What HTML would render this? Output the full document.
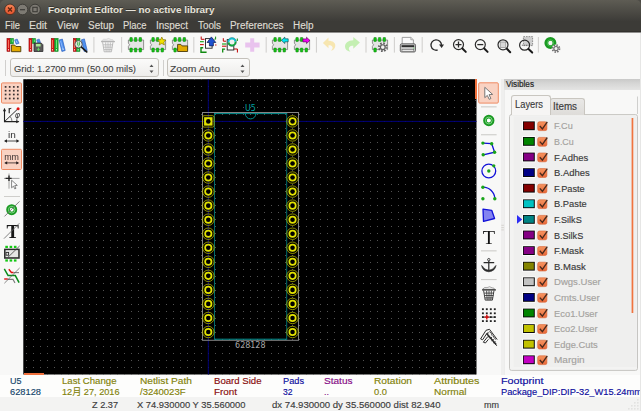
<!DOCTYPE html><html><head><meta charset="utf-8"><title>Footprint Editor</title><style>
html,body{margin:0;padding:0;}
body{width:641px;height:411px;overflow:hidden;background:#f8f8f7;font-family:"Liberation Sans","Noto Sans CJK SC",sans-serif;position:relative;}
.a{position:absolute;}
.t{position:absolute;white-space:nowrap;line-height:1;transform-origin:0 0;-webkit-text-stroke:0.15px currentColor;}
#title{left:0;top:0;width:641px;height:21px;background:linear-gradient(#5e5c54,#3d3c38);border-radius:5px 5px 0 0;}
#menu{left:0;top:21px;width:641px;height:12px;background:linear-gradient(#3c3b37,#3c3b37 10px,#32312e 10px,#32312e 11px,#908f8d 11px);}
#canvas{left:24px;top:79px;width:453px;height:296px;background:#000;overflow:hidden;}
.sep{position:absolute;width:1px;background:#d0cfcd;}
.hsep{position:absolute;height:1px;background:#cfcecb;}
.combo{position:absolute;height:19px;border:1px solid #c4c1bb;border-radius:3px;background:linear-gradient(#fbfbfa,#eeedeb);box-sizing:border-box;}
.pressed{position:absolute;background:#f9d8ca;border:1px solid #f0a689;border-radius:2px;box-sizing:border-box;}
</style></head><body>
<div class="a" style="left:0;top:0;width:641px;height:6px;background:#4d4b46"></div>
<div class="a" id="title"></div><div class="a" id="menu"></div>
<svg class="a" style="left:0;top:0" width="48" height="20" viewBox="0 0 48 20"><defs><linearGradient id="cl" x1="0" y1="0" x2="0" y2="1"><stop offset="0" stop-color="#f58658"/><stop offset="1" stop-color="#e5512a"/></linearGradient></defs><circle cx="10" cy="9.4" r="5.3" fill="url(#cl)" stroke="#3e2a20" stroke-width="0.8"/><path d="M8 7.5l4 4M12 7.5l-4 4" stroke="#5a2410" stroke-width="1.2" fill="none"/><circle cx="22.5" cy="9.5" r="5.3" fill="#7d7a73" stroke="#33322e" stroke-width="0.8"/><path d="M20 9.7h5" stroke="#3c3b37" stroke-width="1.2"/><circle cx="35" cy="9.5" r="5.3" fill="#7d7a73" stroke="#33322e" stroke-width="0.8"/><rect x="32.8" y="7.3" width="4.4" height="4.4" fill="none" stroke="#3c3b37" stroke-width="1.1"/></svg>
<span class="t" style="left:48px;top:5.00px;font-size:9.6px;color:#e6e3da;font-weight:bold;transform:scaleX(1.0343);-webkit-text-stroke:0;text-shadow:0 -1px 0 rgba(0,0,0,0.35);">Footprint Editor — no active library</span>
<span class="t" style="left:5px;top:20.80px;font-size:10px;color:#dfdbd2;transform:scaleX(0.9302);-webkit-text-stroke:0.15px #dfdbd2;">File</span>
<span class="t" style="left:29px;top:20.80px;font-size:10px;color:#dfdbd2;transform:scaleX(1.0444);-webkit-text-stroke:0.15px #dfdbd2;">Edit</span>
<span class="t" style="left:57px;top:20.80px;font-size:10px;color:#dfdbd2;transform:scaleX(1.0000);-webkit-text-stroke:0.15px #dfdbd2;">View</span>
<span class="t" style="left:87.5px;top:20.80px;font-size:10px;color:#dfdbd2;transform:scaleX(0.9946);-webkit-text-stroke:0.15px #dfdbd2;">Setup</span>
<span class="t" style="left:123px;top:20.80px;font-size:10px;color:#dfdbd2;transform:scaleX(0.9394);-webkit-text-stroke:0.15px #dfdbd2;">Place</span>
<span class="t" style="left:156px;top:20.80px;font-size:10px;color:#dfdbd2;transform:scaleX(0.9922);-webkit-text-stroke:0.15px #dfdbd2;">Inspect</span>
<span class="t" style="left:197.5px;top:20.80px;font-size:10px;color:#dfdbd2;transform:scaleX(0.9846);-webkit-text-stroke:0.15px #dfdbd2;">Tools</span>
<span class="t" style="left:229.5px;top:20.80px;font-size:10px;color:#dfdbd2;transform:scaleX(0.9922);-webkit-text-stroke:0.15px #dfdbd2;">Preferences</span>
<span class="t" style="left:292.5px;top:20.80px;font-size:10px;color:#dfdbd2;transform:scaleX(0.9962);-webkit-text-stroke:0.15px #dfdbd2;">Help</span>
<svg class="a" style="left:0;top:0" width="641" height="411"><rect x="93.35" y="37" width="1.1" height="15.6" fill="#d2d1cf"/><rect x="121.05" y="37" width="1.1" height="15.6" fill="#d2d1cf"/><rect x="193.25" y="37" width="1.1" height="15.6" fill="#d2d1cf"/><rect x="265.65" y="37" width="1.1" height="15.6" fill="#d2d1cf"/><rect x="315.9" y="37" width="1.1" height="15.6" fill="#d2d1cf"/><rect x="365.45" y="37" width="1.1" height="15.6" fill="#d2d1cf"/><rect x="393.85" y="37" width="1.1" height="15.6" fill="#d2d1cf"/><rect x="421.65" y="37" width="1.1" height="15.6" fill="#d2d1cf"/><rect x="537.85" y="37" width="1.1" height="15.6" fill="#d2d1cf"/></svg>
<div class="sep" style="left:5px;top:60px;height:16px"></div>
<div class="combo" style="left:10px;top:58px;width:149px"></div>
<div class="combo" style="left:167px;top:58px;width:83px"></div>
<div class="sep" style="left:163px;top:60px;height:16px"></div>
<span class="t" style="left:14px;top:64.05px;font-size:9.5px;color:#404040;transform:scaleX(0.9917);-webkit-text-stroke:0.1px #404040;">Grid: 1.2700 mm (50.00 mils)</span>
<span class="t" style="left:170.3px;top:64.05px;font-size:9.5px;color:#404040;transform:scaleX(1.0881);-webkit-text-stroke:0.1px #404040;">Zoom Auto</span>
<svg class="a" style="left:147.5px;top:62px" width="7" height="13" viewBox="0 0 7 13"><path d="M1.5 5.1l2-2.5 2 2.5zM1.5 8.4l2 2.5 2-2.5z" fill="#555"/></svg>
<svg class="a" style="left:238.5px;top:62px" width="7" height="13" viewBox="0 0 7 13"><path d="M1.5 5.1l2-2.5 2 2.5zM1.5 8.4l2 2.5 2-2.5z" fill="#555"/></svg>
<svg class="a" style="left:0;top:0" width="641" height="411" viewBox="0 0 641 411"><defs><pattern id="ga" x="-72" y="-159" width="7" height="7" patternUnits="userSpaceOnUse"><rect x="0" y="0" width="1" height="1" fill="#525252"/></pattern><pattern id="gb" x="-71" y="-159" width="7" height="7" patternUnits="userSpaceOnUse"><rect x="0" y="0" width="1" height="1" fill="#525252"/></pattern><pattern id="gc" x="-72" y="-158" width="7" height="7" patternUnits="userSpaceOnUse"><rect x="0" y="0" width="1" height="1" fill="#525252"/></pattern><pattern id="gd" x="-71" y="-158" width="7" height="7" patternUnits="userSpaceOnUse"><rect x="0" y="0" width="1" height="1" fill="#525252"/></pattern><clipPath id="cc"><rect x="23.3" y="79.2" width="453.2" height="295.3"/></clipPath></defs><rect x="23.3" y="79.2" width="453.2" height="295.3" fill="#000"/><g clip-path="url(#cc)"><rect x="23" y="79" width="322" height="171" fill="url(#ga)"/><rect x="345" y="79" width="133" height="171" fill="url(#gb)"/><rect x="23" y="250" width="322" height="126" fill="url(#gc)"/><rect x="345" y="250" width="133" height="126" fill="url(#gd)"/><rect x="207.8" y="79" width="1" height="296" fill="#000078"/><rect x="23" y="120.9" width="454" height="1" fill="#000078"/><rect x="202.5" y="112.5" width="96" height="227.8" fill="none" stroke="#848484" stroke-width="1"/><path d="M214.5 339.2V113.6M286.7 113.6V339.2" fill="none" stroke="#006a6a" stroke-width="1"/><path d="M214 113.6H287.2M214 339.2H287.2" fill="none" stroke="#009090" stroke-width="1"/><path d="M245.3 113.6a5.3 5.3 0 0 0 10.6 0" fill="none" stroke="#009090" stroke-width="1"/><rect x="204.1" y="117.2" width="8.4" height="8.4" fill="#e2e200"/><rect x="202.6" y="115.7" width="11.4" height="11.4" rx="1.4" fill="none" stroke="#cccc00" stroke-width="0.7"/><circle cx="208.3" cy="121.4" r="2.3" fill="#000"/><circle cx="292.54" cy="121.4" r="4.05" fill="#e2e200"/><circle cx="292.54" cy="121.4" r="5.75" fill="none" stroke="#cccc00" stroke-width="0.7"/><circle cx="292.54" cy="121.4" r="2.3" fill="#000"/><circle cx="208.3" cy="135.44" r="4.05" fill="#e2e200"/><circle cx="208.3" cy="135.44" r="5.75" fill="none" stroke="#cccc00" stroke-width="0.7"/><circle cx="208.3" cy="135.44" r="2.3" fill="#000"/><circle cx="292.54" cy="135.44" r="4.05" fill="#e2e200"/><circle cx="292.54" cy="135.44" r="5.75" fill="none" stroke="#cccc00" stroke-width="0.7"/><circle cx="292.54" cy="135.44" r="2.3" fill="#000"/><circle cx="208.3" cy="149.48" r="4.05" fill="#e2e200"/><circle cx="208.3" cy="149.48" r="5.75" fill="none" stroke="#cccc00" stroke-width="0.7"/><circle cx="208.3" cy="149.48" r="2.3" fill="#000"/><circle cx="292.54" cy="149.48" r="4.05" fill="#e2e200"/><circle cx="292.54" cy="149.48" r="5.75" fill="none" stroke="#cccc00" stroke-width="0.7"/><circle cx="292.54" cy="149.48" r="2.3" fill="#000"/><circle cx="208.3" cy="163.52" r="4.05" fill="#e2e200"/><circle cx="208.3" cy="163.52" r="5.75" fill="none" stroke="#cccc00" stroke-width="0.7"/><circle cx="208.3" cy="163.52" r="2.3" fill="#000"/><circle cx="292.54" cy="163.52" r="4.05" fill="#e2e200"/><circle cx="292.54" cy="163.52" r="5.75" fill="none" stroke="#cccc00" stroke-width="0.7"/><circle cx="292.54" cy="163.52" r="2.3" fill="#000"/><circle cx="208.3" cy="177.56" r="4.05" fill="#e2e200"/><circle cx="208.3" cy="177.56" r="5.75" fill="none" stroke="#cccc00" stroke-width="0.7"/><circle cx="208.3" cy="177.56" r="2.3" fill="#000"/><circle cx="292.54" cy="177.56" r="4.05" fill="#e2e200"/><circle cx="292.54" cy="177.56" r="5.75" fill="none" stroke="#cccc00" stroke-width="0.7"/><circle cx="292.54" cy="177.56" r="2.3" fill="#000"/><circle cx="208.3" cy="191.6" r="4.05" fill="#e2e200"/><circle cx="208.3" cy="191.6" r="5.75" fill="none" stroke="#cccc00" stroke-width="0.7"/><circle cx="208.3" cy="191.6" r="2.3" fill="#000"/><circle cx="292.54" cy="191.6" r="4.05" fill="#e2e200"/><circle cx="292.54" cy="191.6" r="5.75" fill="none" stroke="#cccc00" stroke-width="0.7"/><circle cx="292.54" cy="191.6" r="2.3" fill="#000"/><circle cx="208.3" cy="205.64" r="4.05" fill="#e2e200"/><circle cx="208.3" cy="205.64" r="5.75" fill="none" stroke="#cccc00" stroke-width="0.7"/><circle cx="208.3" cy="205.64" r="2.3" fill="#000"/><circle cx="292.54" cy="205.64" r="4.05" fill="#e2e200"/><circle cx="292.54" cy="205.64" r="5.75" fill="none" stroke="#cccc00" stroke-width="0.7"/><circle cx="292.54" cy="205.64" r="2.3" fill="#000"/><circle cx="208.3" cy="219.68" r="4.05" fill="#e2e200"/><circle cx="208.3" cy="219.68" r="5.75" fill="none" stroke="#cccc00" stroke-width="0.7"/><circle cx="208.3" cy="219.68" r="2.3" fill="#000"/><circle cx="292.54" cy="219.68" r="4.05" fill="#e2e200"/><circle cx="292.54" cy="219.68" r="5.75" fill="none" stroke="#cccc00" stroke-width="0.7"/><circle cx="292.54" cy="219.68" r="2.3" fill="#000"/><circle cx="208.3" cy="233.72" r="4.05" fill="#e2e200"/><circle cx="208.3" cy="233.72" r="5.75" fill="none" stroke="#cccc00" stroke-width="0.7"/><circle cx="208.3" cy="233.72" r="2.3" fill="#000"/><circle cx="292.54" cy="233.72" r="4.05" fill="#e2e200"/><circle cx="292.54" cy="233.72" r="5.75" fill="none" stroke="#cccc00" stroke-width="0.7"/><circle cx="292.54" cy="233.72" r="2.3" fill="#000"/><circle cx="208.3" cy="247.76" r="4.05" fill="#e2e200"/><circle cx="208.3" cy="247.76" r="5.75" fill="none" stroke="#cccc00" stroke-width="0.7"/><circle cx="208.3" cy="247.76" r="2.3" fill="#000"/><circle cx="292.54" cy="247.76" r="4.05" fill="#e2e200"/><circle cx="292.54" cy="247.76" r="5.75" fill="none" stroke="#cccc00" stroke-width="0.7"/><circle cx="292.54" cy="247.76" r="2.3" fill="#000"/><circle cx="208.3" cy="261.8" r="4.05" fill="#e2e200"/><circle cx="208.3" cy="261.8" r="5.75" fill="none" stroke="#cccc00" stroke-width="0.7"/><circle cx="208.3" cy="261.8" r="2.3" fill="#000"/><circle cx="292.54" cy="261.8" r="4.05" fill="#e2e200"/><circle cx="292.54" cy="261.8" r="5.75" fill="none" stroke="#cccc00" stroke-width="0.7"/><circle cx="292.54" cy="261.8" r="2.3" fill="#000"/><circle cx="208.3" cy="275.84" r="4.05" fill="#e2e200"/><circle cx="208.3" cy="275.84" r="5.75" fill="none" stroke="#cccc00" stroke-width="0.7"/><circle cx="208.3" cy="275.84" r="2.3" fill="#000"/><circle cx="292.54" cy="275.84" r="4.05" fill="#e2e200"/><circle cx="292.54" cy="275.84" r="5.75" fill="none" stroke="#cccc00" stroke-width="0.7"/><circle cx="292.54" cy="275.84" r="2.3" fill="#000"/><circle cx="208.3" cy="289.88" r="4.05" fill="#e2e200"/><circle cx="208.3" cy="289.88" r="5.75" fill="none" stroke="#cccc00" stroke-width="0.7"/><circle cx="208.3" cy="289.88" r="2.3" fill="#000"/><circle cx="292.54" cy="289.88" r="4.05" fill="#e2e200"/><circle cx="292.54" cy="289.88" r="5.75" fill="none" stroke="#cccc00" stroke-width="0.7"/><circle cx="292.54" cy="289.88" r="2.3" fill="#000"/><circle cx="208.3" cy="303.92" r="4.05" fill="#e2e200"/><circle cx="208.3" cy="303.92" r="5.75" fill="none" stroke="#cccc00" stroke-width="0.7"/><circle cx="208.3" cy="303.92" r="2.3" fill="#000"/><circle cx="292.54" cy="303.92" r="4.05" fill="#e2e200"/><circle cx="292.54" cy="303.92" r="5.75" fill="none" stroke="#cccc00" stroke-width="0.7"/><circle cx="292.54" cy="303.92" r="2.3" fill="#000"/><circle cx="208.3" cy="317.96" r="4.05" fill="#e2e200"/><circle cx="208.3" cy="317.96" r="5.75" fill="none" stroke="#cccc00" stroke-width="0.7"/><circle cx="208.3" cy="317.96" r="2.3" fill="#000"/><circle cx="292.54" cy="317.96" r="4.05" fill="#e2e200"/><circle cx="292.54" cy="317.96" r="5.75" fill="none" stroke="#cccc00" stroke-width="0.7"/><circle cx="292.54" cy="317.96" r="2.3" fill="#000"/><circle cx="208.3" cy="332" r="4.05" fill="#e2e200"/><circle cx="208.3" cy="332" r="5.75" fill="none" stroke="#cccc00" stroke-width="0.7"/><circle cx="208.3" cy="332" r="2.3" fill="#000"/><circle cx="292.54" cy="332" r="4.05" fill="#e2e200"/><circle cx="292.54" cy="332" r="5.75" fill="none" stroke="#cccc00" stroke-width="0.7"/><circle cx="292.54" cy="332" r="2.3" fill="#000"/><text x="250.5" y="111" font-family="DejaVu Sans,sans-serif" font-size="8.3" fill="#00a0a0" text-anchor="middle" textLength="10.8" lengthAdjust="spacingAndGlyphs">U5</text><text x="250.3" y="348.3" font-family="DejaVu Sans,sans-serif" font-size="8.2" fill="#a4a4a4" text-anchor="middle" textLength="30.5" lengthAdjust="spacingAndGlyphs">628128</text></g></svg>
<div class="a" style="left:475px;top:79px;width:2px;height:20px;background:#f0703c"></div>
<div class="a" style="left:24px;top:372.5px;width:20px;height:2px;background:#f0703c"></div>
<svg class="a" style="left:0;top:0" width="641" height="411"><rect x="1.5" y="82.9" width="20" height="20.2" rx="1.1" fill="#f9d2c2" stroke="#ef8b63" stroke-width="1"/></svg>
<svg class="a" style="left:0;top:0" width="641" height="411"><rect x="1.5" y="149.3" width="20" height="20.2" rx="1.1" fill="#f9d2c2" stroke="#ef8b63" stroke-width="1"/></svg>
<div class="hsep" style="left:4px;top:196px;width:16px"></div>
<svg class="a" style="left:0;top:0" width="641" height="411"><rect x="478.7" y="82.8" width="19.6" height="20.3" rx="1.1" fill="#f9d2c2" stroke="#ef8b63" stroke-width="1"/></svg>
<svg class="a" style="left:0;top:0" width="641" height="411"><rect x="481" y="106.3" width="15.6" height="1.1" fill="#cdccc9"/><rect x="481" y="134.2" width="15.6" height="1.1" fill="#cdccc9"/><rect x="481" y="250.3" width="15.6" height="1.1" fill="#cdccc9"/><rect x="481" y="279" width="15.6" height="1.1" fill="#cdccc9"/></svg>
<div class="a" style="left:501px;top:79px;width:3px;height:296px;background:#efefee"></div>
<div class="a" style="left:504px;top:79px;width:136px;height:11px;background:linear-gradient(#c9c9c8,#d6d6d5 40%,#e4e4e3)"></div>
<div class="a" style="left:504px;top:90px;width:1px;height:285px;background:#ececeb"></div>
<span class="t" style="left:506.4px;top:80.35px;font-size:8.3px;color:#262626;transform:scaleX(0.9841);-webkit-text-stroke:0.2px #262626;">Visibles</span>
<svg class="a" style="left:0;top:0" width="641" height="411"><path d="M637.5 96.5V114" stroke="#cfcfcd" fill="none"/><rect x="509.5" y="114.6" width="128" height="255.8" rx="2" fill="#f3f3f2" stroke="#c6c5c2" stroke-width="1"/><rect x="513.6" y="116.4" width="123" height="250.6" fill="#efefee"/></svg>
<div class="a" style="left:550px;top:98px;width:35px;height:17px;border:1px solid #c9c6c0;border-bottom:none;border-radius:3px 3px 0 0;background:linear-gradient(#e9e8e6,#dedcd9);box-sizing:border-box"></div>
<div class="a" style="left:511px;top:95px;width:40px;height:20px;border:1px solid #c9c6c0;border-bottom:none;border-radius:3px 3px 0 0;background:#f6f5f4;box-sizing:border-box"></div>
<span class="t" style="left:514.6px;top:99.65px;font-size:10.3px;color:#3c3c3c;transform:scaleX(0.9060);">Layers</span>
<span class="t" style="left:553px;top:101.80px;font-size:10px;color:#3c3c3c;transform:scaleX(0.9815);">Items</span>
<svg class="a" style="left:0;top:0" width="641" height="411"><rect x="631.6" y="118" width="1.7" height="195" fill="#f0743f"/></svg>
<svg class="a" style="left:0;top:0" width="641" height="411"><defs><linearGradient id="cb" x1="0" y1="0" x2="0" y2="1"><stop offset="0" stop-color="#f6945f"/><stop offset="1" stop-color="#e9693a"/></linearGradient></defs>
<rect x="522" y="120.4" width="13.8" height="10.8" fill="#fcfcfc"/>
<rect x="523" y="121.4" width="11.8" height="8.8" fill="#0a0a0a"/>
<rect x="523.8" y="122.2" width="10" height="7" fill="#840000"/>
<rect x="537.7" y="121.8" width="9.2" height="8.8" rx="1.7" fill="url(#cb)" stroke="#d8602f" stroke-width="0.6"/>
<path d="M539.8 126l2.6 2.9 4.9-7" fill="none" stroke="#4a2a1c" stroke-width="1.35"/>
<rect x="522" y="136" width="13.8" height="10.8" fill="#fcfcfc"/>
<rect x="523" y="137" width="11.8" height="8.8" fill="#0a0a0a"/>
<rect x="523.8" y="137.8" width="10" height="7" fill="#008400"/>
<rect x="537.7" y="137.4" width="9.2" height="8.8" rx="1.7" fill="url(#cb)" stroke="#d8602f" stroke-width="0.6"/>
<path d="M539.8 141.6l2.6 2.9 4.9-7" fill="none" stroke="#4a2a1c" stroke-width="1.35"/>
<rect x="522" y="151.6" width="13.8" height="10.8" fill="#fcfcfc"/>
<rect x="523" y="152.6" width="11.8" height="8.8" fill="#0a0a0a"/>
<rect x="523.8" y="153.4" width="10" height="7" fill="#840084"/>
<rect x="537.7" y="153" width="9.2" height="8.8" rx="1.7" fill="url(#cb)" stroke="#d8602f" stroke-width="0.6"/>
<path d="M539.8 157.2l2.6 2.9 4.9-7" fill="none" stroke="#4a2a1c" stroke-width="1.35"/>
<rect x="522" y="167.2" width="13.8" height="10.8" fill="#fcfcfc"/>
<rect x="523" y="168.2" width="11.8" height="8.8" fill="#0a0a0a"/>
<rect x="523.8" y="169" width="10" height="7" fill="#000084"/>
<rect x="537.7" y="168.6" width="9.2" height="8.8" rx="1.7" fill="url(#cb)" stroke="#d8602f" stroke-width="0.6"/>
<path d="M539.8 172.8l2.6 2.9 4.9-7" fill="none" stroke="#4a2a1c" stroke-width="1.35"/>
<rect x="522" y="182.8" width="13.8" height="10.8" fill="#fcfcfc"/>
<rect x="523" y="183.8" width="11.8" height="8.8" fill="#0a0a0a"/>
<rect x="523.8" y="184.6" width="10" height="7" fill="#840000"/>
<rect x="537.7" y="184.2" width="9.2" height="8.8" rx="1.7" fill="url(#cb)" stroke="#d8602f" stroke-width="0.6"/>
<path d="M539.8 188.4l2.6 2.9 4.9-7" fill="none" stroke="#4a2a1c" stroke-width="1.35"/>
<rect x="522" y="198.4" width="13.8" height="10.8" fill="#fcfcfc"/>
<rect x="523" y="199.4" width="11.8" height="8.8" fill="#0a0a0a"/>
<rect x="523.8" y="200.2" width="10" height="7" fill="#00c2c2"/>
<rect x="537.7" y="199.8" width="9.2" height="8.8" rx="1.7" fill="url(#cb)" stroke="#d8602f" stroke-width="0.6"/>
<path d="M539.8 204l2.6 2.9 4.9-7" fill="none" stroke="#4a2a1c" stroke-width="1.35"/>
<rect x="522" y="214" width="13.8" height="10.8" fill="#fcfcfc"/>
<rect x="523" y="215" width="11.8" height="8.8" fill="#0a0a0a"/>
<rect x="523.8" y="215.8" width="10" height="7" fill="#008484"/>
<rect x="537.7" y="215.4" width="9.2" height="8.8" rx="1.7" fill="url(#cb)" stroke="#d8602f" stroke-width="0.6"/>
<path d="M539.8 219.6l2.6 2.9 4.9-7" fill="none" stroke="#4a2a1c" stroke-width="1.35"/>
<path d="M517 215.1L522.2 219.5 517 223.8z" fill="#2c2cf4"/>
<rect x="522" y="229.6" width="13.8" height="10.8" fill="#fcfcfc"/>
<rect x="523" y="230.6" width="11.8" height="8.8" fill="#0a0a0a"/>
<rect x="523.8" y="231.4" width="10" height="7" fill="#840084"/>
<rect x="537.7" y="231" width="9.2" height="8.8" rx="1.7" fill="url(#cb)" stroke="#d8602f" stroke-width="0.6"/>
<path d="M539.8 235.2l2.6 2.9 4.9-7" fill="none" stroke="#4a2a1c" stroke-width="1.35"/>
<rect x="522" y="245.2" width="13.8" height="10.8" fill="#fcfcfc"/>
<rect x="523" y="246.2" width="11.8" height="8.8" fill="#0a0a0a"/>
<rect x="523.8" y="247" width="10" height="7" fill="#840084"/>
<rect x="537.7" y="246.6" width="9.2" height="8.8" rx="1.7" fill="url(#cb)" stroke="#d8602f" stroke-width="0.6"/>
<path d="M539.8 250.8l2.6 2.9 4.9-7" fill="none" stroke="#4a2a1c" stroke-width="1.35"/>
<rect x="522" y="260.8" width="13.8" height="10.8" fill="#fcfcfc"/>
<rect x="523" y="261.8" width="11.8" height="8.8" fill="#0a0a0a"/>
<rect x="523.8" y="262.6" width="10" height="7" fill="#848400"/>
<rect x="537.7" y="262.2" width="9.2" height="8.8" rx="1.7" fill="url(#cb)" stroke="#d8602f" stroke-width="0.6"/>
<path d="M539.8 266.4l2.6 2.9 4.9-7" fill="none" stroke="#4a2a1c" stroke-width="1.35"/>
<rect x="522" y="276.4" width="13.8" height="10.8" fill="#fcfcfc"/>
<rect x="523" y="277.4" width="11.8" height="8.8" fill="#0a0a0a"/>
<rect x="523.8" y="278.2" width="10" height="7" fill="#c2c2c2"/>
<rect x="537.7" y="277.8" width="9.2" height="8.8" rx="1.7" fill="url(#cb)" stroke="#d8602f" stroke-width="0.6"/>
<path d="M539.8 282l2.6 2.9 4.9-7" fill="none" stroke="#4a2a1c" stroke-width="1.35"/>
<rect x="522" y="292" width="13.8" height="10.8" fill="#fcfcfc"/>
<rect x="523" y="293" width="11.8" height="8.8" fill="#0a0a0a"/>
<rect x="523.8" y="293.8" width="10" height="7" fill="#000084"/>
<rect x="537.7" y="293.4" width="9.2" height="8.8" rx="1.7" fill="url(#cb)" stroke="#d8602f" stroke-width="0.6"/>
<path d="M539.8 297.6l2.6 2.9 4.9-7" fill="none" stroke="#4a2a1c" stroke-width="1.35"/>
<rect x="522" y="307.6" width="13.8" height="10.8" fill="#fcfcfc"/>
<rect x="523" y="308.6" width="11.8" height="8.8" fill="#0a0a0a"/>
<rect x="523.8" y="309.4" width="10" height="7" fill="#008400"/>
<rect x="537.7" y="309" width="9.2" height="8.8" rx="1.7" fill="url(#cb)" stroke="#d8602f" stroke-width="0.6"/>
<path d="M539.8 313.2l2.6 2.9 4.9-7" fill="none" stroke="#4a2a1c" stroke-width="1.35"/>
<rect x="522" y="323.2" width="13.8" height="10.8" fill="#fcfcfc"/>
<rect x="523" y="324.2" width="11.8" height="8.8" fill="#0a0a0a"/>
<rect x="523.8" y="325" width="10" height="7" fill="#c2c200"/>
<rect x="537.7" y="324.6" width="9.2" height="8.8" rx="1.7" fill="url(#cb)" stroke="#d8602f" stroke-width="0.6"/>
<path d="M539.8 328.8l2.6 2.9 4.9-7" fill="none" stroke="#4a2a1c" stroke-width="1.35"/>
<rect x="522" y="338.8" width="13.8" height="10.8" fill="#fcfcfc"/>
<rect x="523" y="339.8" width="11.8" height="8.8" fill="#0a0a0a"/>
<rect x="523.8" y="340.6" width="10" height="7" fill="#c2c200"/>
<rect x="537.7" y="340.2" width="9.2" height="8.8" rx="1.7" fill="url(#cb)" stroke="#d8602f" stroke-width="0.6"/>
<path d="M539.8 344.4l2.6 2.9 4.9-7" fill="none" stroke="#4a2a1c" stroke-width="1.35"/>
<rect x="522" y="354.4" width="13.8" height="10.8" fill="#fcfcfc"/>
<rect x="523" y="355.4" width="11.8" height="8.8" fill="#0a0a0a"/>
<rect x="523.8" y="356.2" width="10" height="7" fill="#c200c2"/>
<rect x="537.7" y="355.8" width="9.2" height="8.8" rx="1.7" fill="url(#cb)" stroke="#d8602f" stroke-width="0.6"/>
<path d="M539.8 360l2.6 2.9 4.9-7" fill="none" stroke="#4a2a1c" stroke-width="1.35"/>
</svg>
<span class="t" style="left:553.7px;top:121.65px;font-size:9.3px;color:#a4a29e;transform:scaleX(0.9778);">F.Cu</span>
<span class="t" style="left:553.7px;top:137.65px;font-size:9.3px;color:#a4a29e;transform:scaleX(0.9530);">B.Cu</span>
<span class="t" style="left:553.7px;top:153.65px;font-size:9.3px;color:#3a3a3a;transform:scaleX(1.0180);">F.Adhes</span>
<span class="t" style="left:553.7px;top:168.65px;font-size:9.3px;color:#3a3a3a;transform:scaleX(1.0155);">B.Adhes</span>
<span class="t" style="left:553.7px;top:184.65px;font-size:9.3px;color:#3a3a3a;transform:scaleX(0.9898);">F.Paste</span>
<span class="t" style="left:553.7px;top:199.65px;font-size:9.3px;color:#3a3a3a;transform:scaleX(1.0042);">B.Paste</span>
<span class="t" style="left:553.7px;top:215.65px;font-size:9.3px;color:#3a3a3a;transform:scaleX(0.9746);">F.SilkS</span>
<span class="t" style="left:553.7px;top:231.65px;font-size:9.3px;color:#3a3a3a;transform:scaleX(0.9743);">B.SilkS</span>
<span class="t" style="left:553.7px;top:246.65px;font-size:9.3px;color:#3a3a3a;transform:scaleX(1.0084);">F.Mask</span>
<span class="t" style="left:553.7px;top:262.65px;font-size:9.3px;color:#3a3a3a;transform:scaleX(1.0226);">B.Mask</span>
<span class="t" style="left:553.7px;top:277.65px;font-size:9.3px;color:#a4a29e;transform:scaleX(1.0271);">Dwgs.User</span>
<span class="t" style="left:553.7px;top:293.65px;font-size:9.3px;color:#a4a29e;transform:scaleX(1.0409);">Cmts.User</span>
<span class="t" style="left:553.7px;top:309.65px;font-size:9.3px;color:#a4a29e;transform:scaleX(1.0068);">Eco1.User</span>
<span class="t" style="left:553.7px;top:324.65px;font-size:9.3px;color:#a4a29e;transform:scaleX(1.0068);">Eco2.User</span>
<span class="t" style="left:553.7px;top:340.65px;font-size:9.3px;color:#a4a29e;transform:scaleX(1.0064);">Edge.Cuts</span>
<span class="t" style="left:553.7px;top:355.65px;font-size:9.3px;color:#a4a29e;transform:scaleX(1.0802);">Margin</span>
<div class="a" style="left:0;top:375px;width:641px;height:22px;background:#fdfdfc"></div>
<div class="a" style="left:0;top:397px;width:641px;height:14px;background:#f3f3f2"></div>
<span class="t" style="left:9.5px;top:376.65px;font-size:9.3px;color:#15456a;transform:scaleX(0.9671);">U5</span>
<span class="t" style="left:9.5px;top:387.65px;font-size:9.3px;color:#15456a;transform:scaleX(0.9990);">628128</span>
<span class="t" style="left:61.5px;top:376.65px;font-size:9.3px;color:#82820a;transform:scaleX(1.0335);">Last Change</span>
<span class="t" style="left:61.5px;top:387.65px;font-size:9.3px;color:#82820a;transform:scaleX(0.9842);">12月 27, 2016</span>
<span class="t" style="left:140px;top:376.65px;font-size:9.3px;color:#82820a;transform:scaleX(1.0937);">Netlist Path</span>
<span class="t" style="left:140px;top:387.65px;font-size:9.3px;color:#82820a;transform:scaleX(1.0232);">/3240023F</span>
<span class="t" style="left:214px;top:376.65px;font-size:9.3px;color:#880c0c;transform:scaleX(1.0326);">Board Side</span>
<span class="t" style="left:214px;top:387.65px;font-size:9.3px;color:#880c0c;transform:scaleX(1.0598);">Front</span>
<span class="t" style="left:283px;top:376.65px;font-size:9.3px;color:#0c0c9c;transform:scaleX(0.9904);">Pads</span>
<span class="t" style="left:283px;top:387.65px;font-size:9.3px;color:#0c0c9c;transform:scaleX(0.9184);">32</span>
<span class="t" style="left:324px;top:376.65px;font-size:9.3px;color:#860c86;transform:scaleX(1.0812);">Status</span>
<span class="t" style="left:324px;top:387.65px;font-size:9.3px;color:#860c86;transform:scaleX(0.9668);">..</span>
<span class="t" style="left:374px;top:376.65px;font-size:9.3px;color:#82820a;transform:scaleX(1.0970);">Rotation</span>
<span class="t" style="left:374px;top:387.65px;font-size:9.3px;color:#82820a;transform:scaleX(1.0048);">0.0</span>
<span class="t" style="left:433.5px;top:376.65px;font-size:9.3px;color:#82820a;transform:scaleX(1.1583);">Attributes</span>
<span class="t" style="left:433.5px;top:387.65px;font-size:9.3px;color:#82820a;transform:scaleX(1.0845);">Normal</span>
<span class="t" style="left:500.5px;top:376.65px;font-size:9.3px;color:#0c0c9c;transform:scaleX(1.1579);">Footprint</span>
<span class="t" style="left:500.5px;top:387.65px;font-size:9.3px;color:#0c0c9c;transform:scaleX(0.9994);">Package_DIP:DIP-32_W15.24mm</span>
<span class="t" style="left:91.5px;top:400.65px;font-size:9.3px;color:#3c3c3c;transform:scaleX(0.9864);">Z 2.37</span>
<span class="t" style="left:136.5px;top:400.65px;font-size:9.3px;color:#3c3c3c;transform:scaleX(1.0073);">X 74.930000  Y 35.560000</span>
<span class="t" style="left:271.5px;top:400.65px;font-size:9.3px;color:#3c3c3c;transform:scaleX(1.0315);">dx 74.930000  dy 35.560000  dist 82.940</span>
<span class="t" style="left:484px;top:400.65px;font-size:9.3px;color:#3c3c3c;transform:scaleX(0.9677);">mm</span>
<div class="a" style="left:640px;top:33px;width:1px;height:378px;background:#e6e6e5"></div>
<svg class="a" style="left:626px;top:397px" width="15" height="14" viewBox="0 0 15 14"><g fill="#e2e2e0"><rect x="11" y="2" width="1.6" height="1.6"/><rect x="8" y="5" width="1.6" height="1.6"/><rect x="11" y="5" width="1.6" height="1.6"/><rect x="5" y="8" width="1.6" height="1.6"/><rect x="8" y="8" width="1.6" height="1.6"/><rect x="11" y="8" width="1.6" height="1.6"/><rect x="2" y="11" width="1.6" height="1.6"/><rect x="5" y="11" width="1.6" height="1.6"/><rect x="8" y="11" width="1.6" height="1.6"/><rect x="11" y="11" width="1.6" height="1.6"/></g></svg>
<svg class="a" style="left:0;top:0;pointer-events:none;will-change:transform" width="641" height="411" viewBox="0 0 641 411"><rect x="6.95" y="38.3" width="3" height="13.2" fill="#d81414" stroke="#8a0a0a" stroke-width="0.5"/><rect x="8.1" y="40" width="0.8" height="8" fill="#ff8a70"/><rect x="8" y="49.2" width="0.9" height="1.2" fill="#fff"/><rect x="10.45" y="38.4" width="3.0" height="5.4" fill="#14b030" stroke="#0a7a1a" stroke-width="0.5"/><rect x="11.9" y="39.6" width="0.7" height="2.6" fill="#90f0a0"/><path d="M14.6 39.9l2.6-0.9 1.9 4.3-2.9 0.9z" fill="#4a8ce8" stroke="#2a5ab8" stroke-width="0.5"/><path d="M16.2 40.6l1 2.4" stroke="#d0e4ff" stroke-width="0.7"/><path d="M11.4 45v6.7h9.4v-5.2h-4.9l-1.3-1.5h-3.2z" fill="#e2a900" stroke="#4a3a08" stroke-width="0.9" stroke-linejoin="round"/><rect x="28.95" y="38.3" width="3" height="13.2" fill="#d81414" stroke="#8a0a0a" stroke-width="0.5"/><rect x="30.1" y="40" width="0.8" height="8" fill="#ff8a70"/><rect x="30" y="49.2" width="0.9" height="1.2" fill="#fff"/><rect x="32.45" y="38.4" width="3.0" height="5" fill="#14b030" stroke="#0a7a1a" stroke-width="0.5"/><rect x="33.9" y="39.6" width="0.7" height="2.4" fill="#90f0a0"/><path d="M36.6 39.9l2.6-0.9 1.4 3.6-2.6 0.9z" fill="#4a8ce8" stroke="#2a5ab8" stroke-width="0.5"/><path d="M34 43.1h7.3l1.6 1.6v6.8h-8.9z" fill="#5a5a5a" stroke="#2a2a2a" stroke-width="0.8" stroke-linejoin="round"/><rect x="36" y="43.9" width="4.6" height="2.6" fill="#a8e890"/><path d="M38.4 47.6v2.6M37.2 49.3l1.2 1.3 1.2-1.3" stroke="#60e060" stroke-width="1" fill="none"/><rect x="51.2" y="38.3" width="3.3" height="13.2" fill="#d81414" stroke="#8a0a0a" stroke-width="0.5"/><rect x="52.1" y="40" width="0.8" height="8" fill="#ff8a70"/><rect x="52" y="49.2" width="0.9" height="1.2" fill="#fff"/><rect x="54.75" y="38.3" width="3.4" height="13.2" fill="#14b030" stroke="#0a7a1a" stroke-width="0.5"/><rect x="56.1" y="40" width="0.8" height="8" fill="#80f090"/><rect x="56" y="49.2" width="0.9" height="1.2" fill="#fff"/><path d="M59.1 40l3.3-0.9 2.8 11.4-3.3 1z" fill="#4f90ee" stroke="#1e52b4" stroke-width="0.6"/><path d="M60.6 41l2.2 8" stroke="#a0c4ff" stroke-width="0.7"/><rect x="62.6" y="48.6" width="0.9" height="1.2" fill="#fff" transform="rotate(-16 63 49)"/><rect x="73.3" y="38.3" width="3.1" height="13.2" fill="#d81414" stroke="#8a0a0a" stroke-width="0.5"/><rect x="74.1" y="40" width="0.8" height="8" fill="#ff8a70"/><rect x="74" y="49.2" width="0.9" height="1.2" fill="#fff"/><rect x="76.65" y="38.3" width="3.3" height="13.2" fill="#14b030" stroke="#0a7a1a" stroke-width="0.5"/><rect x="77.7" y="49.2" width="0.9" height="1.2" fill="#fff"/><path d="M81.4 39.8l3-0.9 2.8 11.6-3 1z" fill="#4f90ee" stroke="#1e52b4" stroke-width="0.6"/><circle cx="78.5" cy="44.3" r="3.7" fill="#eef2ee" fill-opacity="0.88" stroke="#4a4a4a" stroke-width="0.9"/><path d="M77.7 42.2v3q0.8 1.4 1.7 0v-3" fill="none" stroke="#30b040" stroke-width="0.9"/><path d="M81.5 47.2l5.2 4.6" stroke="#1a1a1a" stroke-width="1.8" stroke-linecap="round"/><g opacity="0.85"><path d="M101.6 40.9q2-2.6 4.5-1.6q2.5-1.8 5 0.2q2-0.4 2.6 1.6z" fill="#ececec" stroke="#a8a8a8" stroke-width="0.4"/><path d="M101.1 41.6h13.8" stroke="#a8a8a8" stroke-width="1.3"/><path d="M102.6 42.2l1.6 9.6h7.2l1.6-9.6" fill="none" stroke="#a8a8a8" stroke-width="0.9"/><path d="M105.6 42.4l0.6 9.4M108 42.4v9.4M110.4 42.4l-0.6 9.4M103.2 44.8h9.6M103.6 47.2h8.8M104 49.6h8" fill="none" stroke="#a8a8a8" stroke-width="0.8"/></g><path d="M128.4 40h15.2v9.6h-15.2v-3.2l1.2-1.6-1.2-1.6z" fill="#e4e4e4" stroke="#7a7a7a" stroke-width="0.8"/><rect x="129.85" y="37.5" width="2.5" height="3.9" rx="0.4" fill="#14c414" stroke="#0a7a0a" stroke-width="0.5"/><rect x="129.85" y="48.1" width="2.5" height="3.9" rx="0.4" fill="#14c414" stroke="#0a7a0a" stroke-width="0.5"/><rect x="134.35" y="37.5" width="2.5" height="3.9" rx="0.4" fill="#14c414" stroke="#0a7a0a" stroke-width="0.5"/><rect x="134.35" y="48.1" width="2.5" height="3.9" rx="0.4" fill="#14c414" stroke="#0a7a0a" stroke-width="0.5"/><rect x="139.05" y="37.5" width="2.5" height="3.9" rx="0.4" fill="#14c414" stroke="#0a7a0a" stroke-width="0.5"/><rect x="139.05" y="48.1" width="2.5" height="3.9" rx="0.4" fill="#14c414" stroke="#0a7a0a" stroke-width="0.5"/><path d="M150.4 40h15.2v9.6h-15.2v-3.2l1.2-1.6-1.2-1.6z" fill="#e4e4e4" stroke="#7a7a7a" stroke-width="0.8"/><rect x="151.85" y="37.5" width="2.5" height="3.9" rx="0.4" fill="#14c414" stroke="#0a7a0a" stroke-width="0.5"/><rect x="151.85" y="48.1" width="2.5" height="3.9" rx="0.4" fill="#14c414" stroke="#0a7a0a" stroke-width="0.5"/><rect x="156.35" y="37.5" width="2.5" height="3.9" rx="0.4" fill="#14c414" stroke="#0a7a0a" stroke-width="0.5"/><rect x="156.35" y="48.1" width="2.5" height="3.9" rx="0.4" fill="#14c414" stroke="#0a7a0a" stroke-width="0.5"/><rect x="161.05" y="48.1" width="2.5" height="3.9" rx="0.4" fill="#14c414" stroke="#0a7a0a" stroke-width="0.5"/><path d="M161.8 37l1.25 2.7 2.95 0.35-2.2 2 0.6 2.9-2.6-1.5-2.6 1.5 0.6-2.9-2.2-2 2.95-0.35z" fill="#f0e000" stroke="#7a6a00" stroke-width="0.6" stroke-linejoin="round"/><path d="M172.4 40h15.2v9.6h-15.2v-3.2l1.2-1.6-1.2-1.6z" fill="#e4e4e4" stroke="#7a7a7a" stroke-width="0.8"/><rect x="173.85" y="37.5" width="2.5" height="3.9" rx="0.4" fill="#14c414" stroke="#0a7a0a" stroke-width="0.5"/><rect x="173.85" y="48.1" width="2.5" height="3.9" rx="0.4" fill="#14c414" stroke="#0a7a0a" stroke-width="0.5"/><rect x="178.35" y="37.5" width="2.5" height="3.9" rx="0.4" fill="#14c414" stroke="#0a7a0a" stroke-width="0.5"/><rect x="183.05" y="37.5" width="2.5" height="3.9" rx="0.4" fill="#14c414" stroke="#0a7a0a" stroke-width="0.5"/><path d="M177.6 44.4v7.1h10v-5.6h-5.5l-1.3-1.5h-3.2z" fill="#e2a900" stroke="#4a3a08" stroke-width="0.9" stroke-linejoin="round"/><path d="M201.2 36.5v2.8h3.3" fill="none" stroke="#c00000" stroke-width="1"/><path d="M200 41.7h3.8" stroke="#10a010" stroke-width="1.1"/><path d="M200 44.6h3.8" stroke="#d01010" stroke-width="1.1"/><path d="M203.2 47.8h-2.2v4.4h5.6" fill="none" stroke="#108a10" stroke-width="1.4"/><path d="M215.6 36.6v2.6h-1.2" fill="none" stroke="#108a10" stroke-width="1"/><rect x="215.2" y="44.4" width="1.2" height="1.2" fill="#d01010"/><rect x="205.5" y="38.6" width="6.6" height="9.6" fill="#fff" stroke="#222" stroke-width="0.9"/><path d="M211.4 36.9l4.4 5.6h-2.4v3.4h-4v-3.4h-2.4z" fill="#1e50d0" stroke="#0a1a50" stroke-width="0.7" stroke-linejoin="round"/><path d="M223.3 38.2v3h2.8" fill="none" stroke="#c00000" stroke-width="1"/><path d="M222 44h4.4" stroke="#10a010" stroke-width="1.1"/><path d="M222 46.2h4.4" stroke="#d01010" stroke-width="1.1"/><path d="M222.7 52.6v-3.4h2.4" fill="none" stroke="#108a10" stroke-width="1.3"/><path d="M233.8 49h3.6v3.5" fill="none" stroke="#c00000" stroke-width="1"/><path d="M237.3 38.5v2.5" stroke="#108a10" stroke-width="1"/><rect x="227.2" y="39.6" width="6.6" height="10.4" fill="#fff" stroke="#222" stroke-width="0.9"/><circle cx="232" cy="42" r="3.5" fill="#f0f0f0"/><path d="M228.5 42.3a3.5 3.5 0 0 1 7 -0.6" fill="none" stroke="#12c4d6" stroke-width="1.9"/><path d="M235.5 41.7a3.5 3.5 0 0 1 -7 0.6" fill="none" stroke="#12a83c" stroke-width="1.9"/><circle cx="232" cy="42" r="4.5" fill="none" stroke="#1a5a50" stroke-width="0.35"/><path d="M250.2 38.2h4v4.4h5.4v4.8h-5.4v4.4h-4v-4.4h-5v-4.8h5z" fill="#e9c3ee"/><path d="M272.4 40h15.2v9.6h-15.2v-3.2l1.2-1.6-1.2-1.6z" fill="#e4e4e4" stroke="#7a7a7a" stroke-width="0.8"/><rect x="273.85" y="37.5" width="2.5" height="3.9" rx="0.4" fill="#14c414" stroke="#0a7a0a" stroke-width="0.5"/><rect x="273.85" y="48.1" width="2.5" height="3.9" rx="0.4" fill="#14c414" stroke="#0a7a0a" stroke-width="0.5"/><rect x="278.35" y="37.5" width="2.5" height="3.9" rx="0.4" fill="#14c414" stroke="#0a7a0a" stroke-width="0.5"/><rect x="278.35" y="48.1" width="2.5" height="3.9" rx="0.4" fill="#14c414" stroke="#0a7a0a" stroke-width="0.5"/><rect x="283.05" y="48.1" width="2.5" height="3.9" rx="0.4" fill="#14c414" stroke="#0a7a0a" stroke-width="0.5"/><path d="M281.4 40.3l3.4-3.2v1.7h3.4v3h-3.4v1.7z" fill="#00e8f4" stroke="#0a3a40" stroke-width="0.6" stroke-linejoin="round"/><path d="M294.4 40h15.2v9.6h-15.2v-3.2l1.2-1.6-1.2-1.6z" fill="#e4e4e4" stroke="#7a7a7a" stroke-width="0.8"/><rect x="295.85" y="37.5" width="2.5" height="3.9" rx="0.4" fill="#14c414" stroke="#0a7a0a" stroke-width="0.5"/><rect x="295.85" y="48.1" width="2.5" height="3.9" rx="0.4" fill="#14c414" stroke="#0a7a0a" stroke-width="0.5"/><rect x="300.35" y="37.5" width="2.5" height="3.9" rx="0.4" fill="#14c414" stroke="#0a7a0a" stroke-width="0.5"/><rect x="300.35" y="48.1" width="2.5" height="3.9" rx="0.4" fill="#14c414" stroke="#0a7a0a" stroke-width="0.5"/><rect x="305.05" y="48.1" width="2.5" height="3.9" rx="0.4" fill="#14c414" stroke="#0a7a0a" stroke-width="0.5"/><path d="M309.9 40.4l-3.4-3.2v1.7h-3.6v3h3.6v1.7z" fill="#f000f0" stroke="#500050" stroke-width="0.6" stroke-linejoin="round"/><path d="M322.9 42.9l5.6-5.3v3.1c4.5 0 7 2.2 6.8 5.2c-0.2 2.6-2 4.2-4.4 4.9c1.4-1.4 2-2.6 1.6-3.8c-0.5-1.3-2-1.7-4-1.7v3z" fill="#f7e6b0"/><path d="M359.9 42.6l-6.6-5.5v3.2c-5.4 0.2-8.4 3-8.3 6.4c0.1 2.6 2 4.2 5.4 5c-1.5-1.5-1.9-3-1.3-4.2c0.7-1.4 2.3-1.8 4.2-1.8v3z" fill="#c4efb2"/><path d="M372.4 40h15.2v9.6h-15.2v-3.2l1.2-1.6-1.2-1.6z" fill="#e4e4e4" stroke="#7a7a7a" stroke-width="0.8"/><rect x="373.85" y="37.5" width="2.5" height="3.9" rx="0.4" fill="#14c414" stroke="#0a7a0a" stroke-width="0.5"/><rect x="373.85" y="48.1" width="2.5" height="3.9" rx="0.4" fill="#14c414" stroke="#0a7a0a" stroke-width="0.5"/><rect x="378.35" y="37.5" width="2.5" height="3.9" rx="0.4" fill="#14c414" stroke="#0a7a0a" stroke-width="0.5"/><rect x="383.05" y="37.5" width="2.5" height="3.9" rx="0.4" fill="#14c414" stroke="#0a7a0a" stroke-width="0.5"/><circle cx="382.8" cy="47.2" r="4.6" fill="#ececec"/><circle cx="382.8" cy="47.2" r="3.9" fill="none" stroke="#5c5c5c" stroke-width="1.95" stroke-dasharray="1.521 1.5405"/><circle cx="382.8" cy="47.2" r="2.418" fill="#dcdcdc" stroke="#5c5c5c" stroke-width="1.17"/><circle cx="382.8" cy="47.2" r="1.17" fill="#f4f4f4"/><path d="M402.2 44.6v-7.2h8.6l2.6 2.4v4.8z" fill="#fafafa" stroke="#8a8a8a" stroke-width="0.8"/><path d="M410.8 37.4v2.4h2.6" fill="#ddd" stroke="#8a8a8a" stroke-width="0.6"/><rect x="400.3" y="43.8" width="15.2" height="8.2" rx="1.4" fill="#c8c8c8" stroke="#4a4a4a" stroke-width="0.8"/><rect x="401.6" y="45.2" width="12.6" height="1.9" fill="#2c2c2c"/><rect x="402" y="49.4" width="11.8" height="2" fill="#e8e8e8" stroke="#555" stroke-width="0.5"/><rect x="413.3" y="47.6" width="1" height="0.9" fill="#40c040"/><path d="M441.4 45.2a5.2 5.2 0 1 0 -3.6 4.8" fill="none" stroke="#2a2a2a" stroke-width="1.3"/><path d="M439 44.4h5l-2.4 3.6z" fill="#2a2a2a"/><circle cx="458.5" cy="44.6" r="5" fill="none" stroke="#2a2a2a" stroke-width="1.2"/><path d="M462.4 48.5L465.8 51.9" stroke="#1a1a1a" stroke-width="2" stroke-linecap="round"/><path d="M455.5 44.6h6M458.5 41.6v6" stroke="#2a2a2a" stroke-width="1.3"/><circle cx="480.3" cy="44.6" r="5" fill="none" stroke="#2a2a2a" stroke-width="1.2"/><path d="M484.2 48.5L487.6 51.9" stroke="#1a1a1a" stroke-width="2" stroke-linecap="round"/><path d="M477.3 44.6h6" stroke="#2a2a2a" stroke-width="1.3"/><rect x="500.2" y="42" width="5.6" height="5.4" fill="#d8d8d8" stroke="#8a8a8a" stroke-width="0.7"/><circle cx="503" cy="44.8" r="5" fill="none" stroke="#2a2a2a" stroke-width="1.2"/><path d="M506.9 48.7L510.2 52.2" stroke="#1a1a1a" stroke-width="2" stroke-linecap="round"/><rect x="523.4" y="36.6" width="9.2" height="9" fill="#cfcfcf" stroke="#6a6a6a" stroke-width="0.7" stroke-dasharray="1.6 1"/><circle cx="524.6" cy="45.2" r="5" fill="none" stroke="#2a2a2a" stroke-width="1.2"/><path d="M528.5 49.1L532.2 52.6" stroke="#1a1a1a" stroke-width="2" stroke-linecap="round"/><path d="M521.8 45.2h5.6" stroke="#555" stroke-width="0.8" stroke-dasharray="1.4 0.8"/><circle cx="550.4" cy="43" r="4.1" fill="none" stroke="#1a9a22" stroke-width="3.8"/><circle cx="550.4" cy="43" r="3.2" fill="none" stroke="#58c860" stroke-width="0.7"/><circle cx="556" cy="48.6" r="4.2" fill="#f2f1f0"/><circle cx="556" cy="48.6" r="3.5" fill="none" stroke="#6c6c6c" stroke-width="1.75" stroke-dasharray="1.365 1.3825"/><circle cx="556" cy="48.6" r="2.17" fill="#e8e8e8" stroke="#6c6c6c" stroke-width="1.05"/><circle cx="556" cy="48.6" r="1.05" fill="#f4f4f4"/><rect x="4.75" y="86.05" width="1.7" height="1.7" fill="#3a3030"/><rect x="4.75" y="89.85" width="1.7" height="1.7" fill="#3a3030"/><rect x="4.75" y="93.65" width="1.7" height="1.7" fill="#3a3030"/><rect x="4.75" y="97.65" width="1.7" height="1.7" fill="#3a3030"/><rect x="8.85" y="86.05" width="1.7" height="1.7" fill="#3a3030"/><rect x="8.85" y="89.85" width="1.7" height="1.7" fill="#3a3030"/><rect x="8.85" y="93.65" width="1.7" height="1.7" fill="#3a3030"/><rect x="8.85" y="97.65" width="1.7" height="1.7" fill="#3a3030"/><rect x="12.95" y="86.05" width="1.7" height="1.7" fill="#3a3030"/><rect x="12.95" y="89.85" width="1.7" height="1.7" fill="#3a3030"/><rect x="12.95" y="93.65" width="1.7" height="1.7" fill="#3a3030"/><rect x="12.95" y="97.65" width="1.7" height="1.7" fill="#3a3030"/><rect x="16.95" y="86.05" width="1.7" height="1.7" fill="#3a3030"/><rect x="16.95" y="89.85" width="1.7" height="1.7" fill="#3a3030"/><rect x="16.95" y="93.65" width="1.7" height="1.7" fill="#3a3030"/><rect x="16.95" y="97.65" width="1.7" height="1.7" fill="#3a3030"/><path d="M4.5 108.8v12.8h14" fill="none" stroke="#222" stroke-width="1.1"/><path d="M2.9 111.2l1.6-3.2 1.6 3.2zM16.2 120l3.2 1.6-3.2 1.6z" fill="#222"/><path d="M4.5 121.6l13-12.4" stroke="#222" stroke-width="0.95"/><path d="M10 116.4q2 2 2 5" fill="none" stroke="#444" stroke-width="0.7"/><circle cx="18.1" cy="108.8" r="1.5" fill="#e01010"/><text x="8.2" y="113.4" font-family="Liberation Sans,sans-serif" font-size="9" fill="#222" stroke="#222" stroke-width="0.25">r</text><text x="14.8" y="117.6" font-family="DejaVu Sans,sans-serif" font-size="8" font-style="italic" fill="#333">φ</text><text x="8.1" y="137.8" font-family="Liberation Sans,sans-serif" font-size="9.6" fill="#333" textLength="7.8" lengthAdjust="spacingAndGlyphs">in</text><path d="M5.5 141h12.5" stroke="#222" stroke-width="0.8"/><path d="M4 141l3-1.7v3.4zM19.4 141l-3-1.7v3.4z" fill="#222"/><text x="4.2" y="159.7" font-family="Liberation Sans,sans-serif" font-size="9.2" fill="#3a3030" textLength="14.8" lengthAdjust="spacingAndGlyphs">mm</text><path d="M5.5 162.9h12.5" stroke="#2a2020" stroke-width="0.8"/><path d="M4.2 162.9l3-1.7v3.4zM19.2 162.9l-3-1.7v3.4z" fill="#2a2020"/><path d="M4 178.4h15.5M9 173.5v15.2" stroke="#8a8a8a" stroke-width="0.8"/><path d="M5.6 178.4h6M9 175.4v5.6" stroke="#222" stroke-width="1.3"/><path d="M11.6 180.2v7.6l1.9-1.7 1.3 2.8 1.2-0.6-1.3-2.7 2.6-0.2z" fill="#fff" stroke="#555" stroke-width="0.7" stroke-linejoin="round"/><circle cx="11.7" cy="209.7" r="3.7" fill="none" stroke="#1a9a22" stroke-width="3.6"/><circle cx="11.7" cy="209.7" r="3.3" fill="none" stroke="#86d88c" stroke-width="0.9"/><circle cx="11.7" cy="209.7" r="1.6" fill="#fff"/><path d="M4.5 216.4l15-15" stroke="#666" stroke-width="0.8"/><text x="12.6" y="238.2" font-family="Liberation Serif,serif" font-size="19.4" font-weight="bold" fill="#181818" text-anchor="middle" textLength="12.4" lengthAdjust="spacingAndGlyphs">T</text><path d="M4 238.6l15.3-15.3" stroke="#666" stroke-width="0.8"/><rect x="4.8" y="249.4" width="14.2" height="8.6" fill="#c8c8c8" stroke="#2a2a2a" stroke-width="1.5"/><rect x="5.8" y="250.4" width="12.2" height="6.6" fill="#e6e6e6"/><rect x="6" y="252.4" width="2.6" height="2.8" fill="none" stroke="#2a2a2a" stroke-width="0.9"/><rect x="5.3" y="245.8" width="2.6" height="2.2" fill="#14c814"/><rect x="5.3" y="259.4" width="2.6" height="2.2" fill="#14c814"/><rect x="9.6" y="245.8" width="2.6" height="2.2" fill="#14c814"/><rect x="9.6" y="259.4" width="2.6" height="2.2" fill="#14c814"/><rect x="13.9" y="245.8" width="2.6" height="2.2" fill="#14c814"/><rect x="13.9" y="259.4" width="2.6" height="2.2" fill="#14c814"/><path d="M7.6 257.6l12-11.6" stroke="#444" stroke-width="0.8"/><path d="M4.3 268.8l3.8 6.8h7.2l3.8 7" fill="none" stroke="#0a8a1a" stroke-width="1.5"/><path d="M8.8 269.3l2.6 3.2h2.2" fill="none" stroke="#e01010" stroke-width="1.4"/><path d="M4.2 279h3.6" stroke="#e01010" stroke-width="1.4"/><path d="M13.6 272.6h5.4" stroke="#7a7a7a" stroke-width="1.1"/><path d="M7.6 279.4h5.4l2 3.6" fill="none" stroke="#7a7a7a" stroke-width="1.1"/><path d="M4.4 283.2l15.2-15.2" stroke="#555" stroke-width="0.7"/><path d="M484.8 87.3v10.4l2.5-2.3 1.9 3.9 1.7-0.8-1.9-3.8 3.6-0.3z" fill="#fff" stroke="#6a6a6a" stroke-width="0.9" stroke-linejoin="round"/><circle cx="488.8" cy="120.5" r="3.8" fill="none" stroke="#1a9a22" stroke-width="3.7"/><circle cx="488.8" cy="120.5" r="3.4" fill="none" stroke="#86d88c" stroke-width="0.9"/><circle cx="488.8" cy="120.5" r="1.7" fill="#fff"/><path d="M482.9 143.1l8.8 0.6 2.9 8.5-11.4 2.6" fill="none" stroke="#1212d8" stroke-width="1.3"/><circle cx="482.9" cy="143.1" r="1.7" fill="#18a418"/><circle cx="491.7" cy="143.7" r="1.7" fill="#18a418"/><circle cx="494.6" cy="152.2" r="1.7" fill="#18a418"/><circle cx="483.2" cy="154.8" r="1.7" fill="#18a418"/><circle cx="488.8" cy="171" r="6.9" fill="none" stroke="#1212d8" stroke-width="1.3"/><circle cx="488.8" cy="171" r="1.7" fill="#18a418"/><circle cx="493.8" cy="165.8" r="1.6" fill="#18a418"/><path d="M482.9 187.2a11.8 11.8 0 0 1 11.9 11.6" fill="none" stroke="#1212d8" stroke-width="1.3"/><circle cx="482.9" cy="187.2" r="1.7" fill="#18a418"/><circle cx="482.9" cy="198.8" r="1.7" fill="#18a418"/><circle cx="494.8" cy="198.8" r="1.7" fill="#18a418"/><path d="M483 209.2l8.7 1.1 2.9 8.2-11.1 2.9z" fill="#8484f0" stroke="#1212d8" stroke-width="1.3" stroke-linejoin="round"/><text x="489" y="243.8" font-family="Liberation Serif,serif" font-size="19.5" fill="#111" text-anchor="middle" textLength="12.3" lengthAdjust="spacingAndGlyphs">T</text><path d="M501.3 225.3h2.6M501.3 227.6h2.6M501.3 229.9h2.6" stroke="#d2d0cc" stroke-width="0.9"/><circle cx="488.8" cy="259.7" r="1.2" fill="none" stroke="#2a2a2a" stroke-width="0.9"/><path d="M488.8 261v10.3M483.6 262.6h10.6" stroke="#2a2a2a" stroke-width="1.2"/><path d="M481.6 265.4q0.8 5.6 7.2 6.4q6.4-0.8 7.2-6.4l-1.2 1.2q-1.4 3.2-6 3.6q-4.6-0.4-6-3.6z" fill="#2a2a2a" stroke="#2a2a2a" stroke-width="0.6"/><g opacity="1"><path d="M482.6 289.2q2-2.6 4.5-1.6q2.5-1.8 5 0.2q2-0.4 2.6 1.6z" fill="#f4f4f4" stroke="#2e2e2e" stroke-width="0.4"/><path d="M482.1 289.9h13.8" stroke="#2e2e2e" stroke-width="1.3"/><path d="M483.6 290.5l1.6 9.6h7.2l1.6-9.6" fill="none" stroke="#2e2e2e" stroke-width="0.9"/><path d="M486.6 290.7l0.6 9.4M489 290.7v9.4M491.4 290.7l-0.6 9.4M484.2 293.1h9.6M484.6 295.5h8.8M485 297.9h8" fill="none" stroke="#2e2e2e" stroke-width="0.8"/></g><rect x="481.95" y="308.3" width="1.9" height="1.8" fill="#222"/><rect x="481.95" y="312.4" width="1.9" height="1.8" fill="#222"/><rect x="481.95" y="316.2" width="1.9" height="1.8" fill="#222"/><rect x="481.95" y="320.2" width="1.9" height="1.8" fill="#222"/><rect x="485.85" y="308.3" width="1.9" height="1.8" fill="#222"/><rect x="485.85" y="312.4" width="1.9" height="1.8" fill="#222"/><rect x="485.85" y="316.2" width="1.9" height="1.8" fill="#222"/><rect x="485.85" y="320.2" width="1.9" height="1.8" fill="#222"/><rect x="489.85" y="308.3" width="1.9" height="1.8" fill="#222"/><rect x="489.85" y="312.4" width="1.9" height="1.8" fill="#222"/><rect x="489.85" y="316.2" width="1.9" height="1.8" fill="#222"/><rect x="489.85" y="320.2" width="1.9" height="1.8" fill="#222"/><rect x="493.85" y="308.3" width="1.9" height="1.8" fill="#222"/><rect x="493.85" y="312.4" width="1.9" height="1.8" fill="#222"/><rect x="493.85" y="316.2" width="1.9" height="1.8" fill="#222"/><rect x="493.85" y="320.2" width="1.9" height="1.8" fill="#222"/><path d="M482 317.1h13.6" stroke="#222" stroke-width="0.8"/><path d="M484.4 317.1h4.8M486.8 314.7v4.8" stroke="#e01010" stroke-width="1.4"/><path d="M480.6 338.9L486 330.3L489.5 329.3L497.2 339.6M480.6 338.9L482.6 339.8L487 333.2L488.8 332.8" fill="none" stroke="#2a2a2a" stroke-width="1"/><path d="M483.3 342.2L487.6 336.8L489.4 336.6L496.8 345.8M483.3 342.2L485.4 343L488.4 339.4" fill="none" stroke="#2a2a2a" stroke-width="1"/><path d="M486.6 333.4L496.2 344.6" stroke="#2a2a2a" stroke-width="1.5"/><path d="M489.6 331.4l1.2 1.8M491.6 333.2l0.4 2.4M493 335.6l0.8 2M494.6 337.6l0.8 2M489.6 338.6l2.4-1.4M491.4 340.8l2.4-1.4M493.2 343l2.4-1.4" stroke="#2a2a2a" stroke-width="0.9"/></svg>
</body></html>
